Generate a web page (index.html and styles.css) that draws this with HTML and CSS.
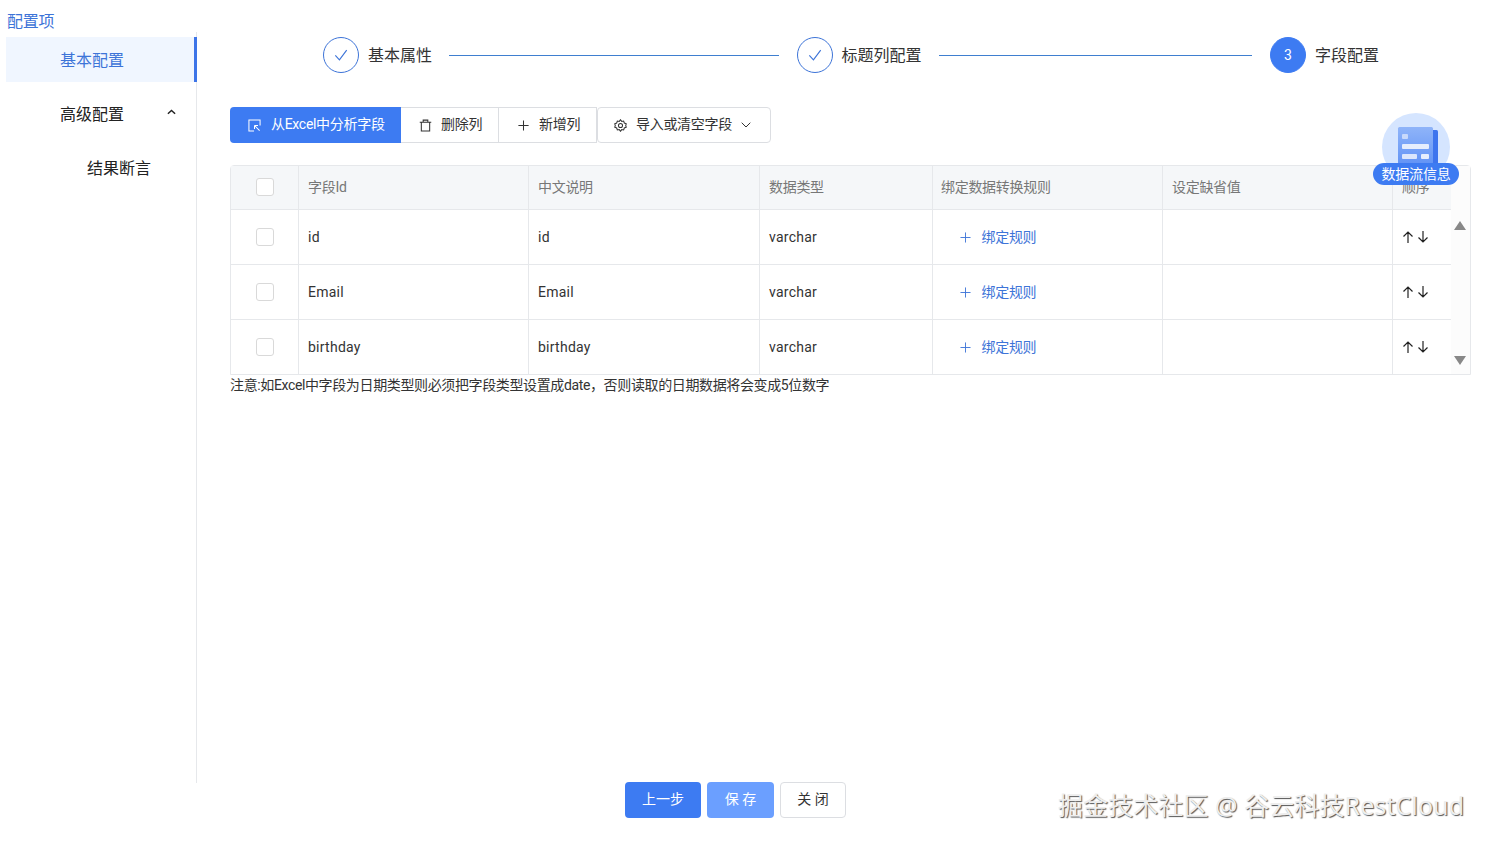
FILE: index.html
```html
<!DOCTYPE html>
<html lang="zh-CN">
<head>
    <meta charset="UTF-8">
    <title>字段配置</title>
    <link rel="stylesheet" href="styles.css">
</head>
<body>
    <div class="page">
        <div class="content">
            <aside class="sidebar">
                <div class="sidebar-title">配置项</div>
                <nav class="menu">
                    <div class="menu-item active">基本配置</div>
                    <div class="menu-item">
                        高级配置
                        <svg class="menu-arrow" viewBox="0 0 10 6"><path d="M1 5 5 1.2 9 5" fill="none" stroke="#222" stroke-width="1.6"/></svg>
                    </div>
                    <div class="menu-item sub">结果断言</div>
                </nav>
            </aside>

            <main class="main">
                <div class="steps">
                    <div class="step">
                        <span class="step-circle"><svg viewBox="0 0 16 16"><path d="M1.5 8.5 6.2 13.5 14.5 2.5" fill="none" stroke="#3d74d8" stroke-width="1.3"/></svg></span>
                        <span class="step-label">基本属性</span>
                        <span class="step-line"></span>
                    </div>
                    <div class="step">
                        <span class="step-circle"><svg viewBox="0 0 16 16"><path d="M1.5 8.5 6.2 13.5 14.5 2.5" fill="none" stroke="#3d74d8" stroke-width="1.3"/></svg></span>
                        <span class="step-label">标题列配置</span>
                        <span class="step-line"></span>
                    </div>
                    <div class="step last">
                        <span class="step-circle current">3</span>
                        <span class="step-label">字段配置</span>
                    </div>
                </div>

                <div class="toolbar">
                    <button class="btn primary analyse">
                        <svg class="icon" viewBox="0 0 14 14" fill="none" stroke="#fff" stroke-width="1.1"><path d="M6.5 13H1V1h12v6M7 7l5.5 5.5M7 7v3.8M7 7h3.8"/></svg>
                        <span>从Excel中分析字段</span>
                    </button>
                    <button class="btn delete">
                        <svg class="icon" viewBox="0 0 14 14" fill="none" stroke="#333" stroke-width="1.1"><path d="M.8 3.5h12.4M2.5 3.5V13h9V3.5M4.5 3.5V1.2h5v2.3"/></svg>
                        <span>删除列</span>
                    </button>
                    <button class="btn add">
                        <svg class="icon" viewBox="0 0 14 14" fill="none" stroke="#333" stroke-width="1.1"><path d="M7 1.5v11M1.5 7h11"/></svg>
                        <span>新增列</span>
                    </button>
                    <button class="btn import">
                        <svg class="icon" viewBox="0 0 14 14" fill="none" stroke="#333" stroke-width="1.1"><path d="M7 .8 8.3 2.6 10.4 2.2 11.1 4.3 13.2 5.1 12.6 7 13.2 8.9 11.1 9.7 10.4 11.8 8.3 11.4 7 13.2 5.7 11.4 3.6 11.8 2.9 9.7.8 8.9 1.4 7 .8 5.1 2.9 4.3 3.6 2.2 5.7 2.6Z"/><circle cx="7" cy="7" r="2.2"/></svg>
                        <span>导入或清空字段</span>
                        <svg class="icon chevron" viewBox="0 0 10 6" fill="none" stroke="#333" stroke-width="1"><path d="M.7.7 5 5 9.3.7"/></svg>
                    </button>
                </div>

                <div class="grid-wrap">
                    <table class="grid">
                        <colgroup>
                            <col class="col-check"><col class="col-id"><col class="col-name"><col class="col-type"><col class="col-rule"><col class="col-default"><col class="col-order">
                        </colgroup>
                        <thead>
                            <tr>
                                <th class="check"><span class="checkbox"></span></th>
                                <th>字段Id</th>
                                <th>中文说明</th>
                                <th>数据类型</th>
                                <th class="rule-head">绑定数据转换规则</th>
                                <th>设定缺省值</th>
                                <th>顺序</th>
                            </tr>
                        </thead>
                        <tbody>
                            <tr>
                                <td class="check"><span class="checkbox"></span></td>
                                <td>id</td>
                                <td>id</td>
                                <td>varchar</td>
                                <td class="rule"><svg class="icon" viewBox="0 0 12 12" fill="none" stroke="#3d74d8"><path d="M6 .5v11M.5 6h11"/></svg>绑定规则</td>
                                <td></td>
                                <td class="order"><svg viewBox="0 0 28 14" fill="none" stroke="#222" stroke-width="1.2"><path d="M6 13V2M1.5 6.5 6 2l4.5 4.5M21 1v11M16.5 7.5 21 12l4.5-4.5"/></svg></td>
                            </tr>
                            <tr>
                                <td class="check"><span class="checkbox"></span></td>
                                <td>Email</td>
                                <td>Email</td>
                                <td>varchar</td>
                                <td class="rule"><svg class="icon" viewBox="0 0 12 12" fill="none" stroke="#3d74d8"><path d="M6 .5v11M.5 6h11"/></svg>绑定规则</td>
                                <td></td>
                                <td class="order"><svg viewBox="0 0 28 14" fill="none" stroke="#222" stroke-width="1.2"><path d="M6 13V2M1.5 6.5 6 2l4.5 4.5M21 1v11M16.5 7.5 21 12l4.5-4.5"/></svg></td>
                            </tr>
                            <tr>
                                <td class="check"><span class="checkbox"></span></td>
                                <td>birthday</td>
                                <td>birthday</td>
                                <td>varchar</td>
                                <td class="rule"><svg class="icon" viewBox="0 0 12 12" fill="none" stroke="#3d74d8"><path d="M6 .5v11M.5 6h11"/></svg>绑定规则</td>
                                <td></td>
                                <td class="order"><svg viewBox="0 0 28 14" fill="none" stroke="#222" stroke-width="1.2"><path d="M6 13V2M1.5 6.5 6 2l4.5 4.5M21 1v11M16.5 7.5 21 12l4.5-4.5"/></svg></td>
                            </tr>
                        </tbody>
                    </table>
                    <div class="scrollbar">
                        <span class="tri up"></span>
                        <span class="tri down"></span>
                    </div>
                </div>
                <p class="note">注意:如Excel中字段为日期类型则必须把字段类型设置成date，否则读取的日期数据将会变成5位数字</p>
            </main>
        </div>

        <footer class="footer">
            <button class="foot-btn prev">上一步</button>
            <button class="foot-btn save">保 存</button>
            <button class="foot-btn close">关 闭</button>
        </footer>

        <!-- floating helper over the table -->
        <div class="flow-info">
            <div class="flow-disc">
                <svg viewBox="0 0 42 44">
                    <defs>
                        <linearGradient id="book" x1="0" y1="0" x2="0" y2="1">
                            <stop offset="0" stop-color="#8fb4f9"/>
                            <stop offset="1" stop-color="#5b8ef5"/>
                        </linearGradient>
                    </defs>
                    <rect x="34" y="4" width="7" height="40" rx="1.5" fill="#3d74ee"/>
                    <rect x="1" y="1" width="35" height="43" rx="1.5" fill="url(#book)"/>
                    <rect x="5" y="8" width="6" height="5" rx="1" fill="#c8d9fb"/>
                    <rect x="5" y="18" width="27" height="5" rx="1" fill="#e6eefd"/>
                    <rect x="5" y="28" width="15" height="5" rx="1" fill="#dbe6fc"/>
                    <rect x="24" y="28" width="8" height="5" rx="1" fill="#e6eefd"/>
                </svg>
            </div>
            <span class="flow-badge">数据流信息</span>
        </div>

        <div class="watermark">掘金技术社区 @ 谷云科技RestCloud</div>
    </div>
</body>
</html>
```

FILE: styles.css
```css
:root {
    --primary: #3d7bf2;
    --line: #e6e8eb;
    --text: #333;
}

* {
    margin: 0;
    padding: 0;
    box-sizing: border-box;
    font-family: Roboto, "Noto Sans CJK SC", sans-serif;
}

body {
    background: #fff;
    color: var(--text);
    font-size: 14px;
}

.page {
    position: relative;
    width: 1489px;
    height: 844px;
    overflow: hidden;
    display: flex;
    flex-direction: column;
}

.content {
    display: flex;
    height: 782px;
}

/* left menu */
.sidebar {
    width: 197px;
    flex: none;
    padding: 12px 0 0 6px;
    display: flex;
    flex-direction: column;
}

.sidebar-title {
    height: 20px;
    line-height: 19px;
    padding-left: 1px;
    font-size: 16px;
    letter-spacing: -0.3px;
    color: #3d74d8;
}

.menu {
    flex: 1;
    padding-top: 5px;
    border-right: 1px solid var(--line);
    margin-bottom: -1px;
}

.menu-item {
    position: relative;
    height: 45px;
    line-height: 47px;
    padding-left: 54px;
    margin-bottom: 9px;
    font-size: 16px;
    color: #222;
}

.menu-item.active {
    color: #3d74d8;
    background: #f0f6ff;
    border-right: 3px solid #3d74e8;
    margin-right: -1px;
}

.menu-item.sub {
    padding-left: 81px;
}

.menu-arrow {
    position: absolute;
    left: 161px;
    top: 18px;
    width: 9px;
    height: 6px;
}

/* steps */
.main {
    flex: 1;
    padding: 37px 18px 0 33px;
    min-width: 0;
}

.steps {
    display: flex;
    margin: 0 92px 0 93px;
}

.step {
    flex: 1;
    display: flex;
    align-items: center;
    height: 36px;
}

.step.last {
    flex: none;
}

.step-circle {
    width: 36px;
    height: 36px;
    flex: none;
    border: 1px solid #3d74d8;
    border-radius: 50%;
    display: flex;
    align-items: center;
    justify-content: center;
    margin-right: 9px;
}

.step-circle svg {
    width: 14px;
    height: 14px;
}

.step-circle.current {
    background: var(--primary);
    border-color: var(--primary);
    color: #fff;
    font-size: 14px;
}

.step-label {
    font-size: 16px;
    color: #333;
    white-space: nowrap;
    padding-bottom: 2px;
}

.step-line {
    flex: 1;
    height: 1px;
    background: #3f7fd0;
    margin: 0 18px 0 17px;
}

/* toolbar */
.toolbar {
    display: flex;
    margin-top: 34px;
    height: 36px;
}

.btn {
    height: 36px;
    background: #fff;
    border: 1px solid #dcdee2;
    border-left: none;
    display: flex;
    align-items: center;
    font-size: 14px;
    color: #333;
    letter-spacing: -0.3px;
}

.btn span {
    padding-bottom: 5px;
}

.btn .icon {
    width: 13px;
    height: 13px;
    flex: none;
}

.btn.primary {
    background: var(--primary);
    border: none;
    border-radius: 4px 0 0 4px;
    color: #fff;
    width: 171px;
    padding-left: 18px;
    gap: 10px;
}

.btn.delete {
    width: 98px;
    padding-left: 18px;
    gap: 9px;
}

.btn.add {
    width: 98px;
    padding-left: 18px;
    gap: 9px;
}

.btn.import {
    width: 174px;
    padding-left: 16px;
    gap: 9px;
    border-left: 1px solid #dcdee2;
    border-radius: 4px;
}

.btn .chevron {
    width: 10px;
    height: 6px;
}

/* fields table */
.grid-wrap {
    display: flex;
    margin-top: 22px;
    height: 210px;
    border: 1px solid var(--line);
    border-radius: 4px 4px 0 0;
}

.grid {
    width: 1220px;
    align-self: flex-start;
    table-layout: fixed;
    border-collapse: collapse;
}

.col-check { width: 67px; }
.col-id { width: 230px; }
.col-name { width: 231px; }
.col-type { width: 173px; }
.col-rule { width: 230px; }
.col-default { width: 230px; }
.col-order { width: 59px; }

.grid th,
.grid td {
    border-right: 1px solid var(--line);
    border-bottom: 1px solid var(--line);
    padding-left: 9.5px;
    text-align: left;
    white-space: nowrap;
    overflow: hidden;
}

.grid th {
    height: 43px;
    padding-bottom: 2px;
    background: #f5f7f9;
    font-weight: 400;
    color: #777;
    letter-spacing: -0.3px;
}

.grid td {
    height: 55px;
    color: #333;
    letter-spacing: 0.25px;
}

.grid th:last-child,
.grid td:last-child {
    border-right: none;
}

.grid tbody tr:last-child td {
    border-bottom: none;
}

.grid .check {
    padding: 0 0 0 2px;
    text-align: center;
}

.grid .rule-head {
    padding-left: 8.5px;
}

.checkbox {
    display: inline-block;
    width: 18px;
    height: 18px;
    background: #fff;
    border: 1px solid #d9d9d9;
    border-radius: 3px;
    vertical-align: middle;
}

.grid .rule {
    padding: 0 0 2px 27px;
    color: #3d74d8;
    letter-spacing: -0.3px;
}

.rule .icon {
    width: 11px;
    height: 11px;
    margin-right: 11px;
    vertical-align: -1px;
}

.order svg {
    display: block;
    width: 28px;
    height: 14px;
}

.scrollbar {
    flex: 1;
    position: relative;
    background: #fcfcfc;
}

.tri {
    position: absolute;
    left: 3px;
    width: 0;
    height: 0;
    border-left: 6px solid transparent;
    border-right: 6px solid transparent;
}

.tri.up {
    top: 55px;
    border-bottom: 9px solid #888;
}

.tri.down {
    top: 190px;
    border-top: 9px solid #888;
}

.note {
    font-size: 14px;
    line-height: 20px;
    letter-spacing: -0.37px;
    color: #333;
}

/* bottom buttons */
.footer {
    display: flex;
    justify-content: center;
    gap: 6px;
    padding-right: 18px;
}

.foot-btn {
    height: 36px;
    border: none;
    border-radius: 4px;
    padding-bottom: 4px;
    font-size: 14px;
    color: #fff;
}

.foot-btn.prev {
    width: 76px;
    background: var(--primary);
}

.foot-btn.save {
    width: 67px;
    background: #6b9fff;
}

.foot-btn.close {
    width: 66px;
    background: #fff;
    border: 1px solid #dcdee2;
    color: #333;
}

/* floating items */
.flow-info {
    position: absolute;
    left: 1373px;
    top: 113px;
    width: 86px;
    height: 72px;
}

.flow-disc {
    position: absolute;
    left: 9px;
    top: 0;
    width: 68px;
    height: 68px;
    border-radius: 50%;
    background: #d5e5ff;
}

.flow-disc svg {
    position: absolute;
    left: 15px;
    top: 13px;
    width: 42px;
    height: 44px;
}

.flow-badge {
    position: absolute;
    left: 0;
    top: 50px;
    width: 86px;
    height: 22px;
    line-height: 22px;
    text-align: center;
    border-radius: 11px;
    background: var(--primary);
    color: #fff;
    font-size: 14px;
    letter-spacing: -0.2px;
}

.watermark {
    position: absolute;
    left: 1058px;
    top: 787px;
    font-family: "Noto Sans", "Noto Sans CJK SC", sans-serif;
    font-size: 25px;
    line-height: 36px;
    letter-spacing: 0.08px;
    white-space: nowrap;
    color: #eee;
    text-shadow: 1px 1px 1px #555;
}
```
